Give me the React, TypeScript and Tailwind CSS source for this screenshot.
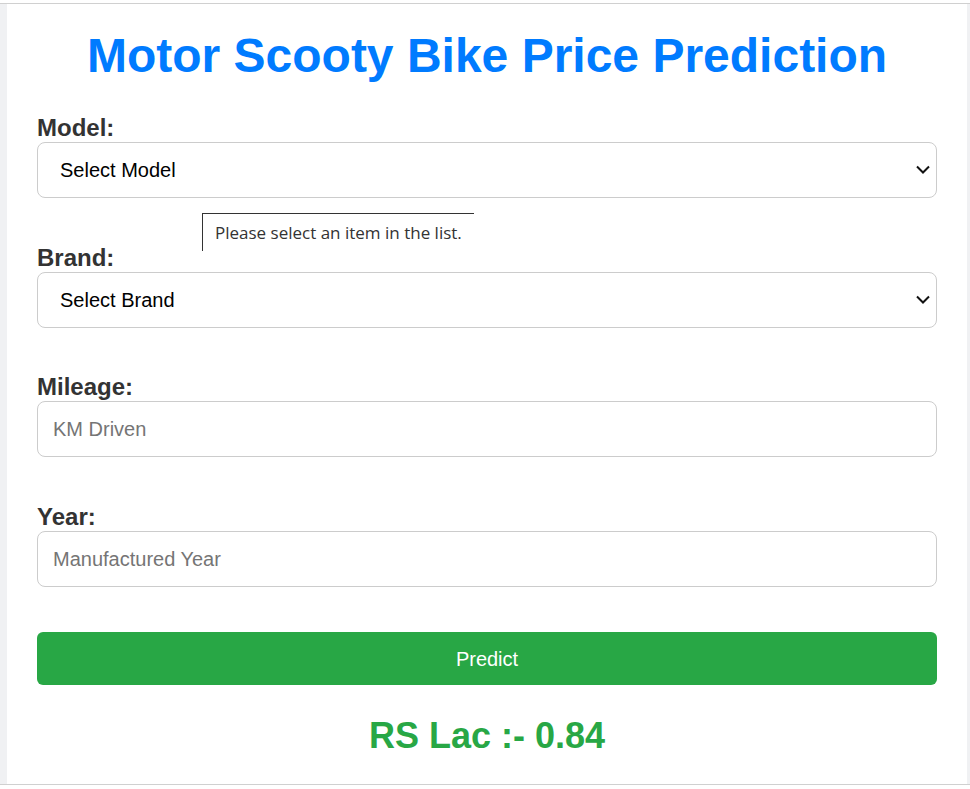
import React from "react";

const font = { fontFamily: '"Liberation Sans", Arial, sans-serif' };

function Chevron() {
  return (
    <svg
      className="pointer-events-none absolute right-[7px] top-1/2 h-[14px] w-[14px] -translate-y-1/2"
      viewBox="0 0 14 14"
      fill="none"
      stroke="#111"
      strokeWidth="2"
    >
      <path d="M1 3.5l6 6 6-6" />
    </svg>
  );
}

export default function App() {
  const labelCls = "block text-[24px] leading-[28px] font-bold text-[#333]";
  const boxCls =
    "w-full h-[56px] rounded-[8px] border border-[#cccccc] bg-white text-[20px] outline-none";

  return (
    <div className="h-[789px] w-full overflow-hidden bg-white pt-[3px]" style={font}>
      <div className="flex border-y border-[#d0d0d0] bg-[#f0f1f3]">
        <div className="relative ml-[7px] h-[780px] w-[960px] bg-white px-[30px] pt-[24px]">
          <h1 className="text-center text-[48px] font-bold leading-[55px] text-[#007bff]">
            Motor Scooty Bike Price Prediction
          </h1>

          <div className="mt-[31px] flex flex-col">
            <div className="mb-[45.7px]">
              <label className={labelCls}>Model:</label>
              <div className="relative">
                <div className={`${boxCls} flex items-center pl-[22px] text-black`}>
                  Select Model
                </div>
                <Chevron />
              </div>
            </div>

            <div className="mb-[45.7px]">
              <label className={labelCls}>Brand:</label>
              <div className="relative">
                <div className={`${boxCls} flex items-center pl-[22px] text-black`}>
                  Select Brand
                </div>
                <Chevron />
              </div>
            </div>

            <div className="mb-[45.7px]">
              <label className={labelCls}>Mileage:</label>
              <input
                className={`${boxCls} px-[15px] placeholder:text-[#757575]`}
                placeholder="KM Driven"
                style={font}
              />
            </div>

            <div>
              <label className={labelCls}>Year:</label>
              <input
                className={`${boxCls} px-[15px] placeholder:text-[#757575]`}
                placeholder="Manufactured Year"
                style={font}
              />
            </div>

            <button
              className="mt-[45px] h-[53px] w-full rounded-[6px] bg-[#28a745] text-[20px] text-white"
              style={font}
            >
              Predict
            </button>

            <div className="mt-[30px] text-center text-[36px] font-bold leading-[41px] text-[#28a745]">
              RS Lac :- 0.84
            </div>
          </div>

          <div
            className="absolute left-[195px] top-[209px] h-[38px] w-[272px] border-l border-t border-[#333] bg-white pl-[12px] pt-[6px] text-[17px] text-[#333]"
            style={{ fontFamily: '"Open Sans", "Noto Sans", sans-serif' }}
          >
            Please select an item in the list.
          </div>
        </div>
      </div>
    </div>
  );
}
